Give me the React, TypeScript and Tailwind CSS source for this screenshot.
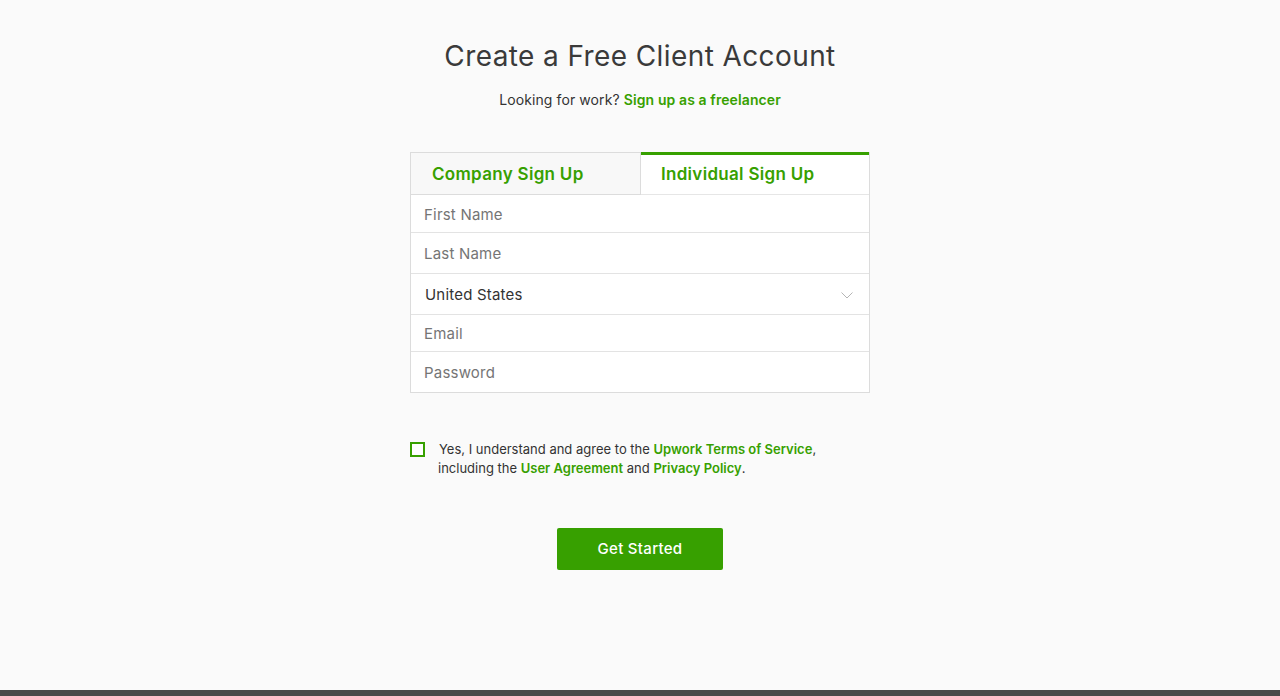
import React from "react";

const green = "text-[#37a000]";

export default function App() {
  return (
    <div className="min-h-[696px] w-full bg-[#fafafa] flex flex-col font-['Inter','Noto_Sans',sans-serif] text-[#222]">
      <div className="flex-1 flex flex-col items-center">
        <h1 className="mt-[38px] text-[28px] leading-[36px] font-normal text-[#3a3a3a] tracking-[0.4px]">
          Create a Free Client Account
        </h1>
        <p className="mt-[18px] text-[14px] leading-[16px] text-[#333] tracking-[0.1px]">
          Looking for work? <span className={`${green} font-semibold`}>Sign up as a freelancer</span>
        </p>

        <div className="mt-[44px] w-[460px] border border-[#dcdcdc] bg-white">
          <div className="flex h-[42px]">
            <div className="flex-1 bg-[#f8f8f8] border-r border-b border-[#dcdcdc] flex items-center pl-[21px] pt-[2px]">
              <span className={`${green} text-[17px] font-semibold tracking-[0.3px]`}>Company Sign Up</span>
            </div>
            <div className="flex-1 bg-white border-t-[3px] border-[#37a000] border-b border-b-[#e6e6e6] flex items-center pl-[20px] -mt-px">
              <span className={`${green} text-[17px] font-semibold tracking-[0.3px]`}>Individual Sign Up</span>
            </div>
          </div>
          <div className="h-[38px] flex items-center pl-[13px] pt-[3px] border-b border-[#e3e3e3] text-[15px] tracking-[0.2px] text-[#757575]">First Name</div>
          <div className="h-[41px] flex items-center pl-[13px] pt-[2px] border-b border-[#e3e3e3] text-[15px] tracking-[0.2px] text-[#757575]">Last Name</div>
          <div className="h-[41px] flex items-center justify-between pl-[14px] pr-[16px] pt-[2px] border-b border-[#e3e3e3] text-[15px] tracking-[0.2px] text-[#333]">
            <span>United States</span>
            <svg width="12" height="7" viewBox="0 0 12 7" fill="none">
              <path d="M0.5 0.5 L6 6 L11.5 0.5" stroke="#b5b5b5" strokeWidth="1" />
            </svg>
          </div>
          <div className="h-[37px] flex items-center pl-[13px] pt-[2px] border-b border-[#e3e3e3] text-[15px] tracking-[0.2px] text-[#757575]">Email</div>
          <div className="h-[40px] flex items-center pl-[13px] pt-[2px] text-[15px] tracking-[0.2px] text-[#757575]">Password</div>
        </div>

        <div className="mt-[48px] w-[460px] flex items-start">
          <div className="mt-[1px] w-[15px] h-[15px] border-2 border-[#37a000] bg-white shrink-0" />
          <p className="ml-[13px] text-[13px] leading-[19px] text-[#333] -mt-[1px]">
            <span className="ml-px">Yes, I understand and agree to the </span><span className={`${green} font-semibold`}>Upwork Terms of Service</span>,
            <br />
            including the <span className={`${green} font-semibold`}>User Agreement</span> and <span className={`${green} font-semibold`}>Privacy Policy</span>.
          </p>
        </div>

        <button className="mt-[50px] w-[166px] h-[42px] bg-[#37a000] rounded-[2px] text-white text-[15px] font-medium tracking-[0.3px]">
          Get Started
        </button>
      </div>
      <div className="h-[6px] bg-[#4a4a4a]" />
    </div>
  );
}
